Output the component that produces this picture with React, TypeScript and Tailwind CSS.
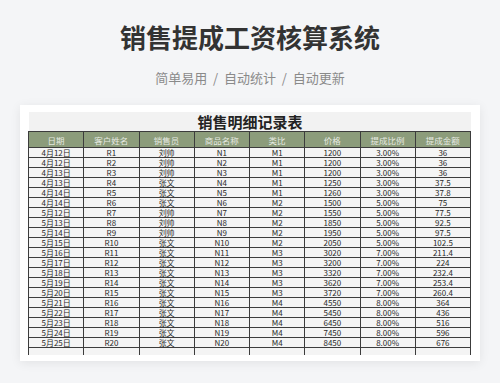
import React from "react";

const headers = ["日期", "客户姓名", "销售员", "商品名称", "类比", "价格", "提成比例", "提成金额"];

const rows: string[][] = [
  ["4月12日", "R1", "刘帅", "N1", "M1", "1200", "3.00%", "36"],
  ["4月12日", "R2", "刘帅", "N2", "M1", "1200", "3.00%", "36"],
  ["4月13日", "R3", "刘帅", "N3", "M1", "1200", "3.00%", "36"],
  ["4月13日", "R4", "张文", "N4", "M1", "1250", "3.00%", "37.5"],
  ["4月14日", "R5", "张文", "N5", "M1", "1260", "3.00%", "37.8"],
  ["4月14日", "R6", "张文", "N6", "M2", "1500", "5.00%", "75"],
  ["5月12日", "R7", "刘帅", "N7", "M2", "1550", "5.00%", "77.5"],
  ["5月13日", "R8", "刘帅", "N8", "M2", "1850", "5.00%", "92.5"],
  ["5月14日", "R9", "刘帅", "N9", "M2", "1950", "5.00%", "97.5"],
  ["5月15日", "R10", "张文", "N10", "M2", "2050", "5.00%", "102.5"],
  ["5月16日", "R11", "张文", "N11", "M3", "3020", "7.00%", "211.4"],
  ["5月17日", "R12", "张文", "N12", "M3", "3200", "7.00%", "224"],
  ["5月18日", "R13", "张文", "N13", "M3", "3320", "7.00%", "232.4"],
  ["5月19日", "R14", "张文", "N14", "M3", "3620", "7.00%", "253.4"],
  ["5月20日", "R15", "张文", "N15", "M3", "3720", "7.00%", "260.4"],
  ["5月21日", "R16", "张文", "N16", "M4", "4550", "8.00%", "364"],
  ["5月22日", "R17", "张文", "N17", "M4", "5450", "8.00%", "436"],
  ["5月23日", "R18", "张文", "N18", "M4", "6450", "8.00%", "516"],
  ["5月24日", "R19", "张文", "N19", "M4", "7450", "8.00%", "596"],
  ["5月25日", "R20", "张文", "N20", "M4", "8450", "8.00%", "676"],
  ["", "", "", "", "", "", "", ""],
];

export default function App() {
  return (
    <div className="w-[500px] h-[383px] overflow-hidden bg-[#f4f5f7] flex flex-col items-center font-['Noto_Sans_CJK_SC',sans-serif]">
      {/* Title */}
      <h1 className="mt-[22px] text-[26px] leading-[30px] font-bold text-[#333]">
        销售提成工资核算系统
      </h1>
      <p className="mt-[18px] text-[13px] leading-[16px] text-[#8a8a8a]">
        简单易用&nbsp;&nbsp;/&nbsp;&nbsp;自动统计&nbsp;&nbsp;/&nbsp;&nbsp;自动更新
      </p>

      {/* Card */}
      <div className="mt-[19px] w-[460px] h-[256px] bg-white shadow-[0_2px_10px_rgba(0,0,0,0.08)] pl-[8px] pr-[9px] pt-[7px]">
        <div className="h-[19px] bg-[#f2f2f2] ml-[1px] flex items-center justify-center text-[15px] font-bold text-[#222] leading-[19px]">
          销售明细记录表
        </div>
        <div className="h-[224px] overflow-hidden">
          <table className="w-[443px] table-fixed border-collapse">
            <thead>
              <tr>
                {headers.map((h) => (
                  <th
                    key={h}
                    className="border border-[#3c3c3c] bg-[#8c9c7b] text-[#e6eae2] text-[8.5px] font-normal h-[16px] leading-[14px] p-0"
                  >
                    {h}
                  </th>
                ))}
              </tr>
            </thead>
            <tbody>
              {rows.map((r, i) => (
                <tr key={i}>
                  {r.map((c, j) => (
                    <td
                      key={j}
                      className="border border-[#3c3c3c] bg-[#f4f4f4] text-[#2a2a2a] text-[8px] text-center p-0 h-[10px]"
                    >
                      <div className="h-[9px] leading-[9px] whitespace-nowrap">{c}</div>
                    </td>
                  ))}
                </tr>
              ))}
            </tbody>
          </table>
        </div>
      </div>
    </div>
  );
}
